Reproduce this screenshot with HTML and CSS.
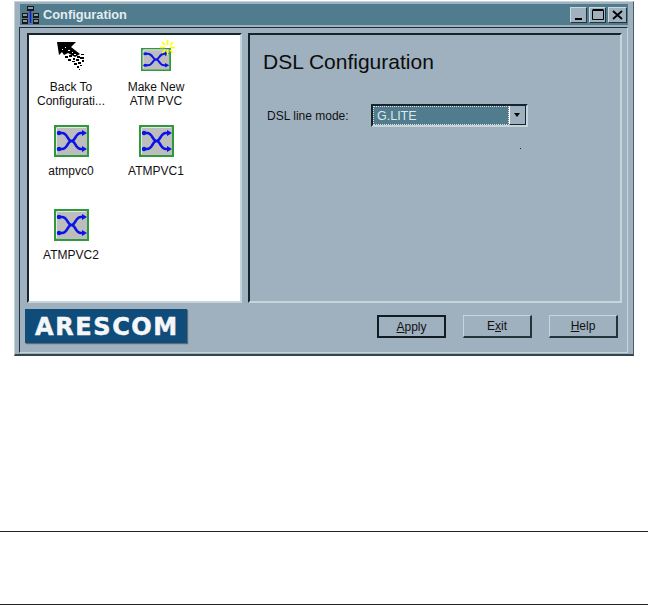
FILE: index.html
```html
<!DOCTYPE html>
<html lang="en">
<head>
  <meta charset="UTF-8">
  <title>Configuration</title>
  <link rel="stylesheet" href="styles.css">
</head>
<body>
  <svg class="defs" width="0" height="0">
    <symbol id="pvc" viewBox="0 0 35 32" preserveAspectRatio="none">
      <rect x="1" y="1" width="33" height="30" fill="#bdbdbd" stroke="#2f9a3c" stroke-width="2"/>
      <path d="M3 2.5H32M2.5 3V29" stroke="#e6e6e6" fill="none"/>
      <path d="M5 8H8C14 8 13 16 17.5 16C22 16 21 8 27 8H30M5 24H8C14 24 13 16 17.5 16C22 16 21 24 27 24H30" fill="none" stroke="#0a14e6" stroke-width="2.6"/>
      <path d="M33 8L28 5V11ZM33 24L28 21V27Z" fill="#0a14e6"/>
      <circle cx="5" cy="8" r="2.2" fill="#0a14e6"/>
      <circle cx="5" cy="24" r="2.2" fill="#0a14e6"/>
    </symbol>
  </svg>

  <div class="window">
    <div class="titlebar">
      <svg class="app-icon" width="18" height="18" viewBox="0 0 18 18">
        <path d="M8.5 3V17" fill="none" stroke="#1018e8" stroke-width="1.6"/>
        <rect x="5" y="0" width="7" height="5" fill="#181818"/>
        <rect x="6" y="1" width="5" height="2" fill="#8d979c"/>
        <rect x="0" y="7" width="6" height="5" fill="#181818"/>
        <rect x="11" y="7" width="6" height="5" fill="#181818"/>
        <rect x="0" y="13" width="6" height="5" fill="#181818"/>
        <rect x="11" y="13" width="6" height="5" fill="#181818"/>
        <rect x="1" y="8" width="4" height="2" fill="#8d979c"/>
        <rect x="12" y="8" width="4" height="2" fill="#8d979c"/>
        <rect x="1" y="14" width="4" height="2" fill="#8d979c"/>
        <rect x="12" y="14" width="4" height="2" fill="#8d979c"/>
      </svg>
      <span class="title-text">Configuration</span>
      <div class="win-buttons">
        <div class="win-btn"><svg width="10" height="10" viewBox="0 0 10 10"><rect x="1" y="8" width="7" height="2" fill="#000"/></svg></div>
        <div class="win-btn"><svg width="12" height="11" viewBox="0 0 12 11"><path d="M0.5 1.5H11.5V10.5H0.5ZM0.5 0.5H11.5" fill="none" stroke="#000"/></svg></div>
        <div class="win-btn win-btn-close"><svg width="11" height="10" viewBox="0 0 11 10"><path d="M1 1L10 9M10 1L1 9" stroke="#000" stroke-width="1.8"/></svg></div>
      </div>
    </div>

    <div class="frame">
      <div class="panes">
        <div class="pane list-pane">
          <div class="item">
            <div class="item-icon">
              <svg width="30" height="30" viewBox="0 0 30 30">
                <path d="M1 1H20L15 6L24 13L19 16L12 12L8 14L6 11L3 14Z" fill="#000"/>
                <path d="M9 15h3v2h-3zM13 14h3v2h-3zM17 17h2v2h-2zM21 15h3v2h-3zM25 13h3v1h-3zM12 18h3v2h-3zM16 20h3v1h-3zM20 18h3v2h-3zM24 16h4v2h-4zM18 22h3v2h-3zM22 21h3v2h-3zM26 19h2v2h-2zM21 25h2v2h-2zM24 24h2v1h-2zM23 28h1v1h-1z" fill="#000"/>
                <path d="M9 6h1v1h-1zM12 9h2v1h-2zM16 11h1v1h-1zM6 8h1v1h-1zM18 13h2v1h-2z" fill="#fff"/>
              </svg>
            </div>
            <div class="item-label">Back To<br>Configurati...</div>
          </div>
          <div class="item">
            <div class="item-icon item-icon-new">
              <svg class="pvc-small" width="30" height="23"><use href="#pvc"/></svg>
              <svg class="spark" width="15" height="15" viewBox="0 0 15 15">
                <path d="M7.5 0V5M7.5 10V15M0 7.5H5M10 7.5H15M2 2L5 5M10 10L13 13M13 2L10 5M5 10L2 13" stroke="#ffff00" stroke-width="1.6"/>
              </svg>
            </div>
            <div class="item-label">Make New<br>ATM PVC</div>
          </div>
          <div class="item">
            <div class="item-icon"><svg width="35" height="32"><use href="#pvc"/></svg></div>
            <div class="item-label">atmpvc0</div>
          </div>
          <div class="item">
            <div class="item-icon"><svg width="35" height="32"><use href="#pvc"/></svg></div>
            <div class="item-label">ATMPVC1</div>
          </div>
          <div class="item">
            <div class="item-icon"><svg width="35" height="32"><use href="#pvc"/></svg></div>
            <div class="item-label">ATMPVC2</div>
          </div>
        </div>

        <div class="pane detail-pane">
          <h1 class="heading">DSL Configuration</h1>
          <div class="field">
            <span class="field-label">DSL line mode:</span>
            <div class="combo">
              <div class="combo-value"><span>G.LITE</span></div>
              <div class="combo-arrow"></div>
            </div>
          </div>
          <div class="dot"></div>
        </div>
      </div>

      <div class="footer">
        <div class="logo">ARESCOM</div>
        <div class="actions">
          <button class="btn btn-default"><u>A</u>pply</button>
          <button class="btn">E<u>x</u>it</button>
          <button class="btn"><u>H</u>elp</button>
        </div>
      </div>
    </div>
  </div>

  <div class="rule rule-first"></div>
  <div class="rule rule-second"></div>
</body>
</html>
```

FILE: styles.css
```css
body {
  margin: 0;
  background-color: #fff;
  font-family: "Liberation Sans", Arial, sans-serif;
  font-size: 12px;
  color: #111;
  overflow: hidden;
}
.defs {
  display: block;
  height: 0;
}
.window {
  box-sizing: border-box;
  width: 620px;
  height: 355px;
  margin: 1px 0 0 14px;
  padding: 2px 5px 3px 4px;
  background-color: #9fb0bf;
  border: 1px solid #c4d5dc;
  border-right-color: #4a5c68;
  border-bottom: 2px solid #33474f;
}
.titlebar {
  display: flex;
  align-items: center;
  height: 21px;
  margin-left: 1px;
  padding-left: 2px;
  background-color: #507c8e;
}
.app-icon {
  flex: none;
}
.title-text {
  margin-left: 3px;
  font-size: 12.8px;
  font-weight: bold;
  color: #e4ecef;
}
.win-buttons {
  display: flex;
  gap: 2px;
  margin-left: auto;
  margin-right: 1px;
}
.win-btn {
  box-sizing: border-box;
  display: flex;
  align-items: center;
  justify-content: center;
  width: 17px;
  height: 16px;
  background-color: #9fb0bf;
  border: 1px solid #c9d8de;
  border-right-color: #24343b;
  border-bottom-color: #24343b;
}
.win-btn-close {
  width: 19px;
}
.frame {
  box-sizing: border-box;
  height: 326px;
  margin-top: 2px;
  padding: 5px 5px 0 6px;
  border: 1px solid #c4d5dc;
  border-top-color: #1e2e36;
  border-left-color: #1e2e36;
}
.panes {
  display: flex;
  gap: 6px;
  height: 270px;
  margin-left: 1px;
}
.pane {
  box-sizing: border-box;
  border: 2px solid #c4d5dc;
  border-top-color: #16242b;
  border-left-color: #16242b;
}
.list-pane {
  display: grid;
  grid-template-columns: 85px 85px;
  grid-auto-rows: 84px;
  align-content: start;
  width: 215px;
  padding: 6px 0 0 0;
  background-color: #fff;
}
.item {
  display: flex;
  flex-direction: column;
  align-items: center;
  margin-left: -1px;
}
.item-icon {
  position: relative;
  height: 39px;
}
.item-icon-new {
  width: 35px;
}
.pvc-small {
  display: block;
  margin: 7px 0 0 2px;
}
.spark {
  position: absolute;
  left: 21px;
  top: -1px;
}
.item-label {
  line-height: 14px;
  text-align: center;
  white-space: nowrap;
}
.detail-pane {
  width: 374px;
  padding: 14px 0 0 13px;
}
.heading {
  margin: 0;
  font-size: 21px;
  font-weight: normal;
  line-height: 26px;
  color: #0c0c0c;
}
.field {
  display: flex;
  align-items: center;
  margin: 29px 0 0 4px;
}
.field-label {
  width: 104px;
}
.combo {
  box-sizing: border-box;
  display: flex;
  width: 157px;
  height: 23px;
  background-color: #fff;
  border: 2px solid #16242b;
  border-right-color: #c4d5dc;
  border-bottom-color: #c4d5dc;
}
.combo-value {
  flex: 1;
  display: flex;
  align-items: center;
  padding-left: 3px;
  background-color: #507c8e;
  border: 1px dotted #e8d8d0;
  color: #dfe8ea;
  font-size: 12.5px;
}
.combo-arrow {
  position: relative;
  width: 15px;
  background-color: #9fb0bf;
  border-left: 1px solid #fff;
  border-right: 1px solid #16242b;
  border-bottom: 1px solid #16242b;
}
.combo-arrow::after {
  content: "";
  position: absolute;
  left: 4px;
  top: 7px;
  border: 3px solid transparent;
  border-top: 4px solid #000;
}
.dot {
  width: 1px;
  height: 1px;
  margin: 21px 0 0 257px;
  background-color: #222;
}
.footer {
  display: flex;
  align-items: flex-start;
  justify-content: space-between;
  margin-top: 6px;
  padding-right: 4px;
}
.logo {
  box-sizing: border-box;
  width: 162px;
  height: 34px;
  margin-left: -1px;
  padding-left: 10px;
  background-color: #104c7a;
  box-shadow: 1px 1px 1px #5d6b74;
  font-family: "DejaVu Sans", sans-serif;
  font-size: 24px;
  font-weight: bold;
  line-height: 36px;
  letter-spacing: 1.6px;
  color: #f4f6f8;
  -webkit-text-stroke: 0.5px #f4f6f8;
}
.actions {
  display: flex;
  gap: 17px;
  margin-top: 6px;
}
.btn {
  box-sizing: border-box;
  width: 69px;
  height: 23px;
  padding: 0;
  background-color: #9fb0bf;
  border: 1px solid #c4d5dc;
  border-right: 2px solid #24343b;
  border-bottom: 2px solid #24343b;
  font-family: "Liberation Sans", Arial, sans-serif;
  font-size: 12px;
  color: #111;
}
.btn-default {
  border: 2px solid #101c22;
}
.rule {
  width: 648px;
  height: 1px;
  background-color: #222;
}
.rule-first {
  margin-top: 175px;
}
.rule-second {
  margin-top: 72px;
}
```
